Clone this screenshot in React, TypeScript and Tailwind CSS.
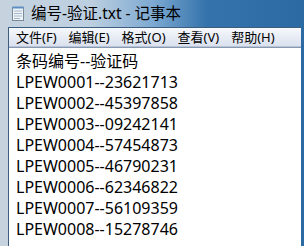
const lines = [
  "条码编号--验证码",
  "LPEW0001--23621713",
  "LPEW0002--45397858",
  "LPEW0003--09242141",
  "LPEW0004--57454873",
  "LPEW0005--46790231",
  "LPEW0006--62346822",
  "LPEW0007--56109359",
  "LPEW0008--15278746",
];

const menus = ["文件(F)", "编辑(E)", "格式(O)", "查看(V)", "帮助(H)"];

const NoteIcon = () => (
  <svg width="14" height="16" viewBox="0 0 14 16">
    <rect x="1.5" y="1.5" width="11" height="13" fill="#eef3f8" stroke="#7d8a99" />
    <path d="M3 5h8M3 7.5h8M3 10h8M3 12.5h6" stroke="#a9b8c8" strokeWidth="1" />
    <rect x="1.5" y="0.5" width="11" height="2" fill="#5d8fc2" />
  </svg>
);

export default function App() {
  return (
    <div
      className="w-[304px] h-[246px] overflow-hidden flex flex-col bg-[linear-gradient(90deg,#c6d3df_0%,#bccfe0_30%,#7eaad2_50%,#3473ab_68%,#2b6aa3_100%)]"
      style={{ fontFamily: '"Noto Sans", "Noto Sans CJK SC", sans-serif' }}
    >
      <div className="h-[27px] flex items-center gap-[6px] pl-[11px] text-[15.5px] text-black shrink-0">
        <NoteIcon />
        <span className="leading-none">编号-验证.txt - 记事本</span>
      </div>
      <div className="flex-1 flex pl-[8px] pr-[3px] min-h-0">
        <div className="flex-1 flex flex-col bg-white border-l border-t border-[#3d5d7e] min-h-0">
          <div className="h-[19px] flex items-center gap-[12px] pl-[7px] text-[13px] text-black bg-gradient-to-b from-[#f6f8fc] to-[#dae1ee] border-b border-[#b9c4d6] shrink-0">
            {menus.map((m) => (
              <span key={m} className="leading-none">{m}</span>
            ))}
          </div>
          <div className="flex-1 border-t border-[#8799b0] pl-[7px] pt-[3px] text-[16px] leading-[21px] text-black">
            {lines.map((l) => (
              <div key={l}>{l}</div>
            ))}
          </div>
        </div>
      </div>
    </div>
  );
}
